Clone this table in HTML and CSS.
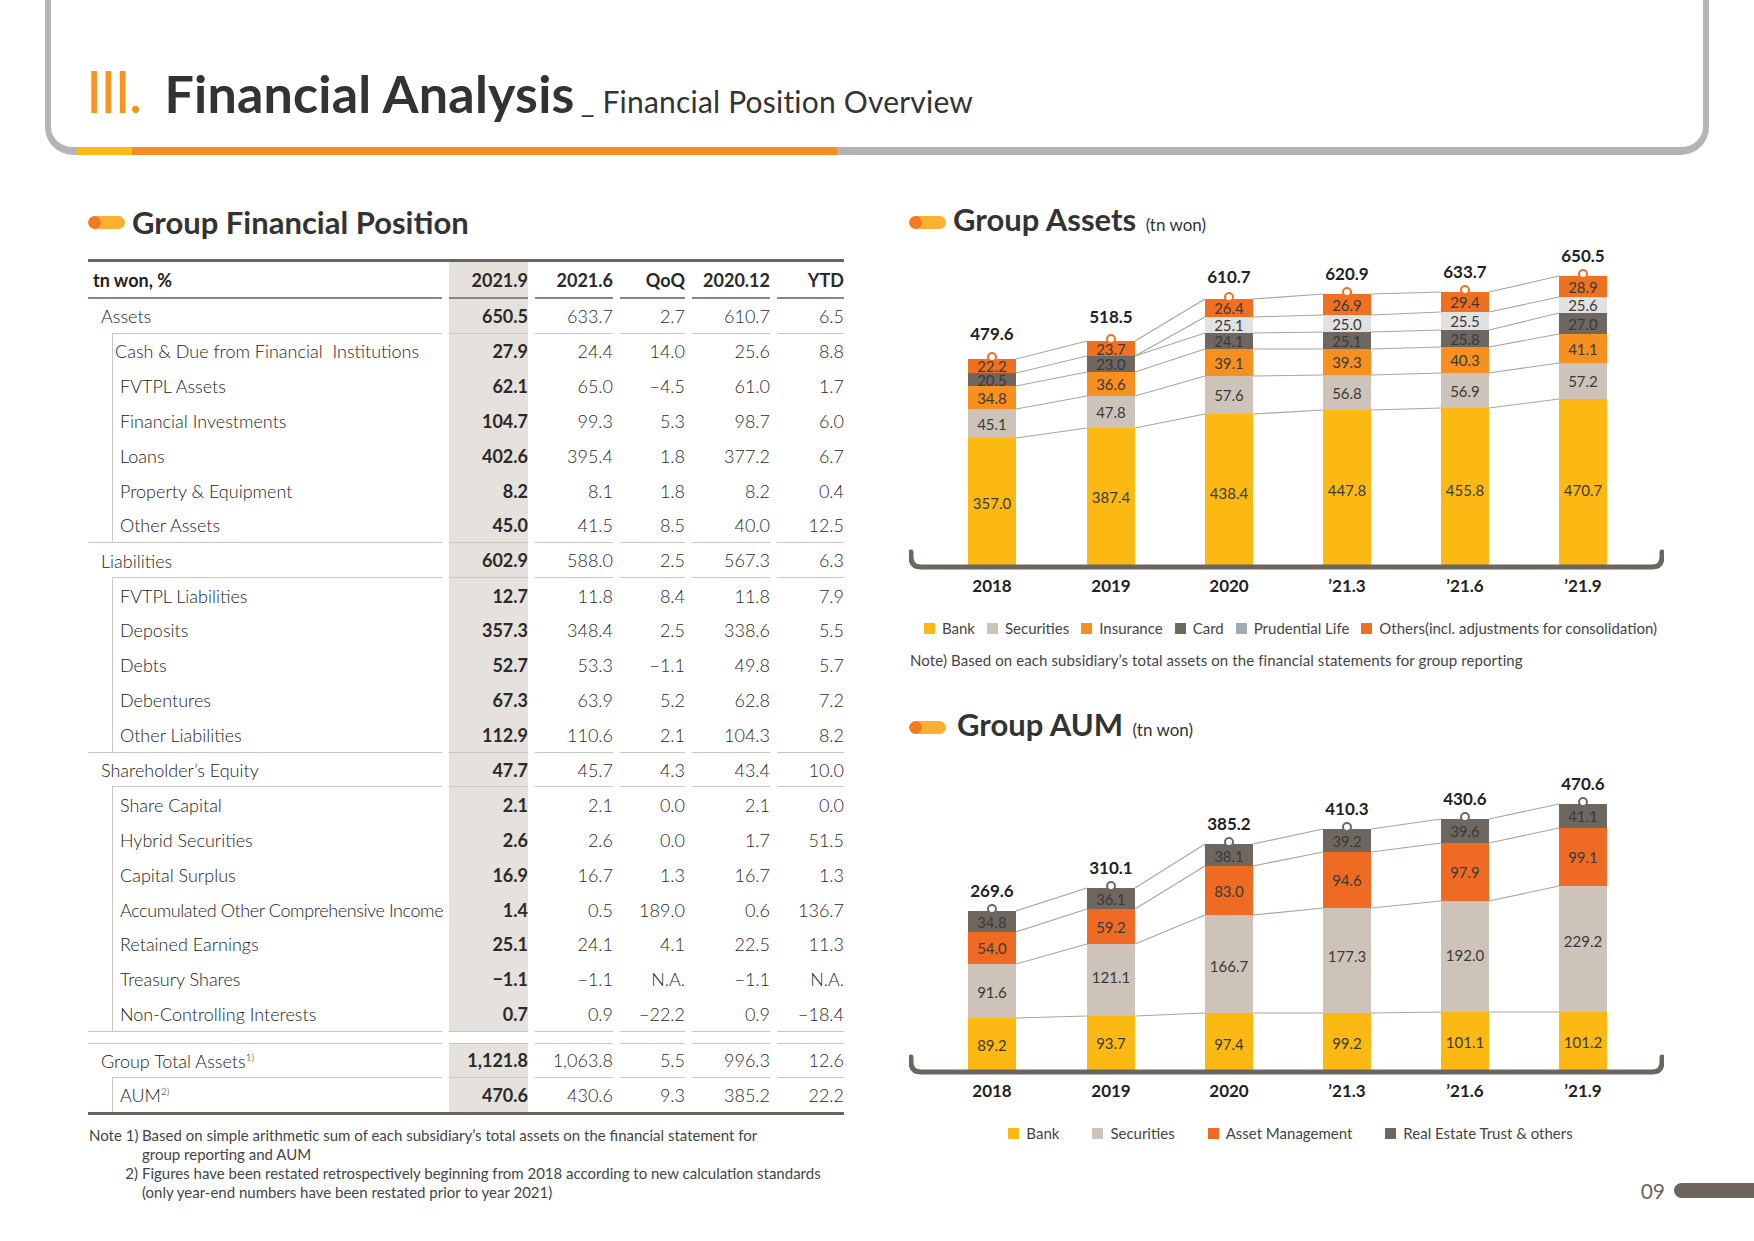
FILE: index.html
```html
<!DOCTYPE html>
<html lang="en">
<head>
<meta charset="utf-8">
<title>Financial Analysis - Financial Position Overview</title>
<link rel="stylesheet" href="styles.css">
</head>
<body>
<header class="page-header">
  <h1 class="page-title"><span class="chap">III.</span><span class="main-t">Financial Analysis</span><span class="sub-t">_ Financial Position Overview</span></h1>
  <div class="header-bar"></div>
</header>

<div class="main">
  <section class="left">
    <h2 class="sec-title"><span class="pill"></span><span class="sec-text">Group Financial Position</span></h2>
    <div class="fin-wrap">
      <table class="fin">
        <colgroup>
          <col class="w-lbl"><col class="w-a"><col class="w-b"><col class="w-c"><col class="w-d"><col class="w-e">
        </colgroup>
        <thead>
          <tr><th class="lbl hdr-lbl">tn won, %</th><th class="c1">2021.9</th><th>2021.6</th><th>QoQ</th><th>2020.12</th><th>YTD</th></tr>
        </thead>
        <tbody>
          <tr class="top"><td class="lbl">Assets</td><td class="c1">650.5</td><td>633.7</td><td>2.7</td><td>610.7</td><td>6.5</td></tr>
          <tr class="sub"><td class="lbl lbl-cash">Cash &amp; Due from Financial&nbsp; Institutions</td><td class="c1">27.9</td><td>24.4</td><td>14.0</td><td>25.6</td><td>8.8</td></tr>
          <tr class="sub"><td class="lbl">FVTPL Assets</td><td class="c1">62.1</td><td>65.0</td><td>−4.5</td><td>61.0</td><td>1.7</td></tr>
          <tr class="sub"><td class="lbl">Financial Investments</td><td class="c1">104.7</td><td>99.3</td><td>5.3</td><td>98.7</td><td>6.0</td></tr>
          <tr class="sub"><td class="lbl">Loans</td><td class="c1">402.6</td><td>395.4</td><td>1.8</td><td>377.2</td><td>6.7</td></tr>
          <tr class="sub"><td class="lbl">Property &amp; Equipment</td><td class="c1">8.2</td><td>8.1</td><td>1.8</td><td>8.2</td><td>0.4</td></tr>
          <tr class="sub end"><td class="lbl">Other Assets</td><td class="c1">45.0</td><td>41.5</td><td>8.5</td><td>40.0</td><td>12.5</td></tr>
          <tr class="top"><td class="lbl">Liabilities</td><td class="c1">602.9</td><td>588.0</td><td>2.5</td><td>567.3</td><td>6.3</td></tr>
          <tr class="sub"><td class="lbl">FVTPL Liabilities</td><td class="c1">12.7</td><td>11.8</td><td>8.4</td><td>11.8</td><td>7.9</td></tr>
          <tr class="sub"><td class="lbl">Deposits</td><td class="c1">357.3</td><td>348.4</td><td>2.5</td><td>338.6</td><td>5.5</td></tr>
          <tr class="sub"><td class="lbl">Debts</td><td class="c1">52.7</td><td>53.3</td><td>−1.1</td><td>49.8</td><td>5.7</td></tr>
          <tr class="sub"><td class="lbl">Debentures</td><td class="c1">67.3</td><td>63.9</td><td>5.2</td><td>62.8</td><td>7.2</td></tr>
          <tr class="sub end"><td class="lbl">Other Liabilities</td><td class="c1">112.9</td><td>110.6</td><td>2.1</td><td>104.3</td><td>8.2</td></tr>
          <tr class="top"><td class="lbl">Shareholder’s Equity</td><td class="c1">47.7</td><td>45.7</td><td>4.3</td><td>43.4</td><td>10.0</td></tr>
          <tr class="sub"><td class="lbl">Share Capital</td><td class="c1">2.1</td><td>2.1</td><td>0.0</td><td>2.1</td><td>0.0</td></tr>
          <tr class="sub"><td class="lbl">Hybrid Securities</td><td class="c1">2.6</td><td>2.6</td><td>0.0</td><td>1.7</td><td>51.5</td></tr>
          <tr class="sub"><td class="lbl">Capital Surplus</td><td class="c1">16.9</td><td>16.7</td><td>1.3</td><td>16.7</td><td>1.3</td></tr>
          <tr class="sub"><td class="lbl lbl-tight">Accumulated Other Comprehensive Income</td><td class="c1">1.4</td><td>0.5</td><td>189.0</td><td>0.6</td><td>136.7</td></tr>
          <tr class="sub"><td class="lbl">Retained Earnings</td><td class="c1">25.1</td><td>24.1</td><td>4.1</td><td>22.5</td><td>11.3</td></tr>
          <tr class="sub"><td class="lbl">Treasury Shares</td><td class="c1">−1.1</td><td>−1.1</td><td>N.A.</td><td>−1.1</td><td>N.A.</td></tr>
          <tr class="sub end"><td class="lbl">Non-Controlling Interests</td><td class="c1">0.7</td><td>0.9</td><td>−22.2</td><td>0.9</td><td>−18.4</td></tr>
          <tr class="spacer"><td></td><td></td><td></td><td></td><td></td><td></td></tr>
          <tr class="top total"><td class="lbl">Group Total Assets<sup>1)</sup></td><td class="c1">1,121.8</td><td>1,063.8</td><td>5.5</td><td>996.3</td><td>12.6</td></tr>
          <tr class="sub last"><td class="lbl">AUM<sup>2)</sup></td><td class="c1">470.6</td><td>430.6</td><td>9.3</td><td>385.2</td><td>22.2</td></tr>
        </tbody>
      </table>
    </div>
    <div class="notes">
      <span class="note-num">Note 1)</span><span class="note-body">Based on simple arithmetic sum of each subsidiary’s total assets on the financial statement for<br>group reporting and AUM</span>
      <span class="note-num">2)</span><span class="note-body">Figures have been restated retrospectively beginning from 2018 according to new calculation standards<br>(only year-end numbers have been restated prior to year 2021)</span>
    </div>
  </section>

  <section class="right">
    <h2 class="sec-title"><span class="pill"></span><span class="sec-text">Group Assets <span class="unit">(tn won)</span></span></h2>
    <svg class="chart" width="755" height="360" viewBox="909 240 755 360" aria-label="Group Assets chart">
      <g>
        <line class="ln" x1="1016" y1="359" x2="1087" y2="341"/>
        <line class="ln" x1="1016" y1="373" x2="1087" y2="356"/>
        <line class="ln" x1="1016" y1="386" x2="1087" y2="372"/>
        <line class="ln" x1="1016" y1="409" x2="1087" y2="396"/>
        <line class="ln" x1="1016" y1="438" x2="1087" y2="428"/>
        <line class="ln" x1="1135" y1="341" x2="1205" y2="299"/>
        <line class="ln" x1="1135" y1="356" x2="1205" y2="317"/>
        <line class="ln" x1="1135" y1="356" x2="1205" y2="333"/>
        <line class="ln" x1="1135" y1="372" x2="1205" y2="349"/>
        <line class="ln" x1="1135" y1="396" x2="1205" y2="376"/>
        <line class="ln" x1="1135" y1="428" x2="1205" y2="414"/>
        <line class="ln" x1="1253" y1="299" x2="1323" y2="294"/>
        <line class="ln" x1="1253" y1="317" x2="1323" y2="315"/>
        <line class="ln" x1="1253" y1="333" x2="1323" y2="332"/>
        <line class="ln" x1="1253" y1="349" x2="1323" y2="349"/>
        <line class="ln" x1="1253" y1="376" x2="1323" y2="375"/>
        <line class="ln" x1="1253" y1="414" x2="1323" y2="410"/>
        <line class="ln" x1="1371" y1="294" x2="1441" y2="292"/>
        <line class="ln" x1="1371" y1="315" x2="1441" y2="312"/>
        <line class="ln" x1="1371" y1="332" x2="1441" y2="330"/>
        <line class="ln" x1="1371" y1="349" x2="1441" y2="347"/>
        <line class="ln" x1="1371" y1="375" x2="1441" y2="373"/>
        <line class="ln" x1="1371" y1="410" x2="1441" y2="408"/>
        <line class="ln" x1="1489" y1="292" x2="1559" y2="276"/>
        <line class="ln" x1="1489" y1="312" x2="1559" y2="297"/>
        <line class="ln" x1="1489" y1="330" x2="1559" y2="313"/>
        <line class="ln" x1="1489" y1="347" x2="1559" y2="334"/>
        <line class="ln" x1="1489" y1="373" x2="1559" y2="363"/>
        <line class="ln" x1="1489" y1="408" x2="1559" y2="399"/>
      </g>
      <g>
        <rect class="oth" x="968" y="359" width="48" height="14"/>
        <rect class="card" x="968" y="373" width="48" height="13"/>
        <rect class="ins" x="968" y="386" width="48" height="23"/>
        <rect class="sec" x="968" y="409" width="48" height="29"/>
        <rect class="bank" x="968" y="438" width="48" height="128"/>

        <rect class="oth" x="1087" y="341" width="48" height="15"/>
        <rect class="card" x="1087" y="356" width="48" height="16"/>
        <rect class="ins" x="1087" y="372" width="48" height="24"/>
        <rect class="sec" x="1087" y="396" width="48" height="32"/>
        <rect class="bank" x="1087" y="428" width="48" height="138"/>

        <rect class="oth" x="1205" y="299" width="48" height="18"/>
        <rect class="prud" x="1205" y="317" width="48" height="16"/>
        <rect class="card" x="1205" y="333" width="48" height="16"/>
        <rect class="ins" x="1205" y="349" width="48" height="27"/>
        <rect class="sec" x="1205" y="376" width="48" height="38"/>
        <rect class="bank" x="1205" y="414" width="48" height="152"/>

        <rect class="oth" x="1323" y="294" width="48" height="21"/>
        <rect class="prud" x="1323" y="315" width="48" height="17"/>
        <rect class="card" x="1323" y="332" width="48" height="17"/>
        <rect class="ins" x="1323" y="349" width="48" height="26"/>
        <rect class="sec" x="1323" y="375" width="48" height="35"/>
        <rect class="bank" x="1323" y="410" width="48" height="156"/>

        <rect class="oth" x="1441" y="292" width="48" height="20"/>
        <rect class="prud" x="1441" y="312" width="48" height="18"/>
        <rect class="card" x="1441" y="330" width="48" height="17"/>
        <rect class="ins" x="1441" y="347" width="48" height="26"/>
        <rect class="sec" x="1441" y="373" width="48" height="35"/>
        <rect class="bank" x="1441" y="408" width="48" height="158"/>

        <rect class="oth" x="1559" y="276" width="48" height="21"/>
        <rect class="prud" x="1559" y="297" width="48" height="16"/>
        <rect class="card" x="1559" y="313" width="48" height="21"/>
        <rect class="ins" x="1559" y="334" width="48" height="29"/>
        <rect class="sec" x="1559" y="363" width="48" height="36"/>
        <rect class="bank" x="1559" y="399" width="48" height="167"/>
      </g>
      <g>
        <circle class="pin pin-o" cx="992" cy="357" r="4"/>
        <circle class="pin pin-o" cx="1111" cy="339" r="4"/>
        <circle class="pin pin-o" cx="1229" cy="297" r="4"/>
        <circle class="pin pin-o" cx="1347" cy="292" r="4"/>
        <circle class="pin pin-o" cx="1465" cy="290" r="4"/>
        <circle class="pin pin-o" cx="1583" cy="274" r="4"/>
      </g>
      <g>
        <text class="v" x="992" y="365.5">22.2</text>
        <text class="v" x="992" y="380">20.5</text>
        <text class="v" x="992" y="397.5">34.8</text>
        <text class="v" x="992" y="423.5">45.1</text>
        <text class="v" x="992" y="503">357.0</text>

        <text class="v" x="1111" y="348.5">23.7</text>
        <text class="v" x="1111" y="364">23.0</text>
        <text class="v" x="1111" y="384">36.6</text>
        <text class="v" x="1111" y="412">47.8</text>
        <text class="v" x="1111" y="497">387.4</text>

        <text class="v" x="1229" y="308">26.4</text>
        <text class="v" x="1229" y="325">25.1</text>
        <text class="v" x="1229" y="341">24.1</text>
        <text class="v" x="1229" y="362.5">39.1</text>
        <text class="v" x="1229" y="395">57.6</text>
        <text class="v" x="1229" y="493">438.4</text>

        <text class="v" x="1347" y="304.5">26.9</text>
        <text class="v" x="1347" y="323.5">25.0</text>
        <text class="v" x="1347" y="340.5">25.1</text>
        <text class="v" x="1347" y="362">39.3</text>
        <text class="v" x="1347" y="392.5">56.8</text>
        <text class="v" x="1347" y="490">447.8</text>

        <text class="v" x="1465" y="302">29.4</text>
        <text class="v" x="1465" y="321">25.5</text>
        <text class="v" x="1465" y="338.5">25.8</text>
        <text class="v" x="1465" y="360">40.3</text>
        <text class="v" x="1465" y="390.5">56.9</text>
        <text class="v" x="1465" y="490">455.8</text>

        <text class="v" x="1583" y="286.5">28.9</text>
        <text class="v" x="1583" y="305">25.6</text>
        <text class="v" x="1583" y="323.5">27.0</text>
        <text class="v" x="1583" y="348.5">41.1</text>
        <text class="v" x="1583" y="381">57.2</text>
        <text class="v" x="1583" y="490">470.7</text>
      </g>
      <g>
        <text class="t" x="992" y="333">479.6</text>
        <text class="t" x="1111" y="316">518.5</text>
        <text class="t" x="1229" y="276">610.7</text>
        <text class="t" x="1347" y="273">620.9</text>
        <text class="t" x="1465" y="271">633.7</text>
        <text class="t" x="1583" y="255">650.5</text>
      </g>
      <path class="axis" d="M 911 552 V 557 Q 911 567 921 567 H 1652 Q 1662 567 1662 557 V 552"/>
      <g>
        <text class="y" x="992" y="585">2018</text>
        <text class="y" x="1111" y="585">2019</text>
        <text class="y" x="1229" y="585">2020</text>
        <text class="y" x="1347" y="585">’21.3</text>
        <text class="y" x="1465" y="585">’21.6</text>
        <text class="y" x="1583" y="585">’21.9</text>
      </g>
    </svg>
    <div class="legend legend-assets">
      <span class="lg"><i class="sw sw-bank"></i>Bank</span>
      <span class="lg"><i class="sw sw-sec"></i>Securities</span>
      <span class="lg"><i class="sw sw-ins"></i>Insurance</span>
      <span class="lg"><i class="sw sw-card"></i>Card</span>
      <span class="lg"><i class="sw sw-prud"></i>Prudential Life</span>
      <span class="lg"><i class="sw sw-oth"></i>Others(incl. adjustments for consolidation)</span>
    </div>
    <p class="chart-note">Note) Based on each subsidiary’s total assets on the financial statements for group reporting</p>

    <h2 class="sec-title aum-title"><span class="pill"></span><span class="sec-text">Group AUM <span class="unit">(tn won)</span></span></h2>
    <svg class="chart" width="755" height="360" viewBox="909 745 755 360" aria-label="Group AUM chart">
      <g>
        <line class="ln" x1="1016" y1="911" x2="1087" y2="888"/>
        <line class="ln" x1="1016" y1="932" x2="1087" y2="909"/>
        <line class="ln" x1="1016" y1="964" x2="1087" y2="944"/>
        <line class="ln" x1="1016" y1="1018" x2="1087" y2="1016"/>
        <line class="ln" x1="1135" y1="888" x2="1205" y2="844"/>
        <line class="ln" x1="1135" y1="909" x2="1205" y2="866"/>
        <line class="ln" x1="1135" y1="944" x2="1205" y2="915"/>
        <line class="ln" x1="1135" y1="1016" x2="1205" y2="1013"/>
        <line class="ln" x1="1253" y1="844" x2="1323" y2="829"/>
        <line class="ln" x1="1253" y1="866" x2="1323" y2="852"/>
        <line class="ln" x1="1253" y1="915" x2="1323" y2="908"/>
        <line class="ln" x1="1253" y1="1013" x2="1323" y2="1013"/>
        <line class="ln" x1="1371" y1="829" x2="1441" y2="819"/>
        <line class="ln" x1="1371" y1="852" x2="1441" y2="843"/>
        <line class="ln" x1="1371" y1="908" x2="1441" y2="901"/>
        <line class="ln" x1="1371" y1="1013" x2="1441" y2="1012"/>
        <line class="ln" x1="1489" y1="819" x2="1559" y2="804"/>
        <line class="ln" x1="1489" y1="843" x2="1559" y2="828"/>
        <line class="ln" x1="1489" y1="901" x2="1559" y2="886"/>
        <line class="ln" x1="1489" y1="1012" x2="1559" y2="1012"/>
      </g>
      <g>
        <rect class="re" x="968" y="911" width="48" height="21"/>
        <rect class="am" x="968" y="932" width="48" height="32"/>
        <rect class="sec" x="968" y="964" width="48" height="54"/>
        <rect class="bank" x="968" y="1018" width="48" height="52"/>

        <rect class="re" x="1087" y="888" width="48" height="21"/>
        <rect class="am" x="1087" y="909" width="48" height="35"/>
        <rect class="sec" x="1087" y="944" width="48" height="72"/>
        <rect class="bank" x="1087" y="1016" width="48" height="54"/>

        <rect class="re" x="1205" y="844" width="48" height="22"/>
        <rect class="am" x="1205" y="866" width="48" height="49"/>
        <rect class="sec" x="1205" y="915" width="48" height="98"/>
        <rect class="bank" x="1205" y="1013" width="48" height="57"/>

        <rect class="re" x="1323" y="829" width="48" height="23"/>
        <rect class="am" x="1323" y="852" width="48" height="56"/>
        <rect class="sec" x="1323" y="908" width="48" height="105"/>
        <rect class="bank" x="1323" y="1013" width="48" height="57"/>

        <rect class="re" x="1441" y="819" width="48" height="24"/>
        <rect class="am" x="1441" y="843" width="48" height="58"/>
        <rect class="sec" x="1441" y="901" width="48" height="111"/>
        <rect class="bank" x="1441" y="1012" width="48" height="58"/>

        <rect class="re" x="1559" y="804" width="48" height="24"/>
        <rect class="am" x="1559" y="828" width="48" height="58"/>
        <rect class="sec" x="1559" y="886" width="48" height="126"/>
        <rect class="bank" x="1559" y="1012" width="48" height="58"/>
      </g>
      <g>
        <circle class="pin pin-g" cx="992" cy="909" r="4"/>
        <circle class="pin pin-g" cx="1111" cy="886" r="4"/>
        <circle class="pin pin-g" cx="1229" cy="842" r="4"/>
        <circle class="pin pin-g" cx="1347" cy="827" r="4"/>
        <circle class="pin pin-g" cx="1465" cy="817" r="4"/>
        <circle class="pin pin-g" cx="1583" cy="802" r="4"/>
      </g>
      <g>
        <text class="v" x="992" y="922">34.8</text>
        <text class="v" x="992" y="948">54.0</text>
        <text class="v" x="992" y="992">91.6</text>
        <text class="v" x="992" y="1045">89.2</text>

        <text class="v" x="1111" y="899">36.1</text>
        <text class="v" x="1111" y="927">59.2</text>
        <text class="v" x="1111" y="977">121.1</text>
        <text class="v" x="1111" y="1043">93.7</text>

        <text class="v" x="1229" y="856">38.1</text>
        <text class="v" x="1229" y="891">83.0</text>
        <text class="v" x="1229" y="966">166.7</text>
        <text class="v" x="1229" y="1044">97.4</text>

        <text class="v" x="1347" y="841">39.2</text>
        <text class="v" x="1347" y="880">94.6</text>
        <text class="v" x="1347" y="956">177.3</text>
        <text class="v" x="1347" y="1043">99.2</text>

        <text class="v" x="1465" y="831">39.6</text>
        <text class="v" x="1465" y="872">97.9</text>
        <text class="v" x="1465" y="955">192.0</text>
        <text class="v" x="1465" y="1042">101.1</text>

        <text class="v" x="1583" y="816">41.1</text>
        <text class="v" x="1583" y="857">99.1</text>
        <text class="v" x="1583" y="941">229.2</text>
        <text class="v" x="1583" y="1042">101.2</text>
      </g>
      <g>
        <text class="t" x="992" y="890">269.6</text>
        <text class="t" x="1111" y="867">310.1</text>
        <text class="t" x="1229" y="823">385.2</text>
        <text class="t" x="1347" y="808">410.3</text>
        <text class="t" x="1465" y="798">430.6</text>
        <text class="t" x="1583" y="783">470.6</text>
      </g>
      <path class="axis" d="M 911 1057 V 1062 Q 911 1072 921 1072 H 1652 Q 1662 1072 1662 1062 V 1057"/>
      <g>
        <text class="y" x="992" y="1090">2018</text>
        <text class="y" x="1111" y="1090">2019</text>
        <text class="y" x="1229" y="1090">2020</text>
        <text class="y" x="1347" y="1090">’21.3</text>
        <text class="y" x="1465" y="1090">’21.6</text>
        <text class="y" x="1583" y="1090">’21.9</text>
      </g>
    </svg>
    <div class="legend legend-aum">
      <span class="lg"><i class="sw sw-bank"></i>Bank</span>
      <span class="lg"><i class="sw sw-sec"></i>Securities</span>
      <span class="lg"><i class="sw sw-am"></i>Asset Management</span>
      <span class="lg"><i class="sw sw-card"></i>Real Estate Trust &amp; others</span>
    </div>
    <div class="folio"><span class="folio-num">09</span><span class="folio-bar"></span></div>
  </section>
</div>
</body>
</html>
```

FILE: styles.css
```css
* { box-sizing: border-box; margin: 0; padding: 0; }
html, body { width: 1754px; height: 1241px; }
body {
  background: #fff;
  font-family: Lato, "Noto Sans", sans-serif;
  color: #333;
  overflow: hidden;
}

/* ---------- header ---------- */
.page-header {
  position: relative;
  margin-left: 45px;
  width: 1664px;
  height: 155px;
  border: 6px solid #b4b4b4;
  border-top: 0;
  border-bottom-width: 8px;
  border-radius: 0 0 28px 28px;
  padding: 61px 0 0 35px;
}
.page-title {
  line-height: 60px;
  font-size: 52px;
  font-weight: 700;
  color: #333;
  white-space: nowrap;
}
.chap {
  font-size: 58px;
  font-weight: 400;
  color: #f7941d;
  letter-spacing: -2px;
  margin-right: 24px;
}
.main-t { letter-spacing: 0.2px; }
.sub-t {
  font-size: 30px;
  font-weight: 400;
  margin-left: 6px;
  letter-spacing: 0.2px;
}
.header-bar {
  position: absolute;
  left: 25px;
  bottom: -8px;
  width: 761px;
  height: 8px;
  border-radius: 4px 0 0 4px;
  background: linear-gradient(to right, #fdb913 56px, #f68b1f 56px);
}

/* ---------- layout ---------- */
.main { display: flex; padding-top: 49px; }
.left { width: 756px; margin-left: 88px; }
.right { width: 845px; margin-left: 65px; }

.sec-title {
  display: flex;
  align-items: center;
  height: 36px;
  line-height: 36px;
  font-size: 31px;
  font-weight: 700;
  color: #333;
  white-space: nowrap;
}
.pill {
  flex: none;
  width: 37px;
  height: 13px;
  border-radius: 7px;
  margin-right: 7px;
  background: radial-gradient(circle at 6.5px 50%, #f47920 6px, rgba(244,121,32,0) 6.6px), #fbb034;
}
.unit { font-size: 17px; font-weight: 400; margin-left: 2px; }

/* ---------- table ---------- */
.fin-wrap {
  margin-top: 19px;
  border-top: 3px solid #6b635c;
  border-bottom: 3px solid #6b635c;
}
.fin {
  width: 770px;
  margin: 0 -7px;
  border-collapse: separate;
  border-spacing: 7px 0;
  table-layout: fixed;
  font-size: 18px;
  color: #2a2a2a;
}
.w-lbl { width: 354px; }
.w-a { width: 79px; }
.w-b { width: 78px; }
.w-c { width: 65px; }
.w-d { width: 78px; }
.w-e { width: 67px; }

.fin th, .fin td {
  padding: 0;
  text-align: right;
  white-space: nowrap;
  vertical-align: middle;
  font-weight: 300;
}
.fin thead tr { height: 37px; }
.fin thead th {
  font-weight: 700;
  border-bottom: 2px solid #8d8680;
}
.fin .lbl { text-align: left; color: #222; }
.fin .lbl-tight { letter-spacing: -0.4px; }
.fin .hdr-lbl { padding-left: 5px; }
.fin .c1 { background-color: #e5e1dc; font-weight: 700; }

.fin tbody tr { height: 34.9px; }
.fin .top .lbl { padding-left: 13px; }
.fin .top td { border-bottom: 1px solid #c9c5c1; }
.fin .top td.lbl {
  border-bottom: 0;
  background: linear-gradient(#c9c5c1, #c9c5c1) 24px 100% / calc(100% - 24px) 1px no-repeat;
}
.fin .sub .lbl {
  padding-left: 32px;
  background: linear-gradient(#c9c5c1, #c9c5c1) 24px 0 / 1px 100% no-repeat;
}
.fin .sub .lbl-cash { padding-left: 27px; }
.fin .end td { border-bottom: 1px solid #c9c5c1; }
.fin tr.spacer { height: 11px; }
.fin tr.spacer td { background: none; }
.fin .total td { border-top: 1px solid #c9c5c1; }
.fin .total { height: 35px; }
.fin tr.last { height: 34px; }
.fin sup { font-size: 10px; vertical-align: 7px; line-height: 0; }

.notes {
  margin-top: 11px;
  display: grid;
  grid-template-columns: 49px 1fr;
  column-gap: 4px;
  font-size: 15px;
  line-height: 19px;
  color: #444;
  white-space: nowrap;
  margin-left: 1px;
}
.note-num { text-align: right; }

/* ---------- charts ---------- */
.chart { display: block; }
.chart text {
  font-family: Lato, "Noto Sans", sans-serif;
  text-anchor: middle;
  dominant-baseline: central;
}
.chart .v { font-size: 15px; font-weight: 400; fill: #3a3a3a; }
.chart .t { font-size: 17px; font-weight: 700; fill: #222; }
.chart .y { font-size: 17px; font-weight: 700; fill: #222; }
.chart .ln { stroke: #aaa59f; stroke-width: 1.2; fill: none; }
.chart .axis { stroke: #6d665f; stroke-width: 5; fill: none; stroke-linecap: round; stroke-linejoin: round; }
.chart .pin { fill: #fff; stroke-width: 2; }
.chart .pin-o { stroke: #f07022; }
.chart .pin-g { stroke: #6e6760; }

.bank { fill: #fdb913; }
.sec { fill: #cdc3b9; }
.ins { fill: #f7901e; }
.card { fill: #6e6760; }
.prud { fill: #e1e1e1; }
.oth { fill: #f07022; }
.am { fill: #ef6b24; }
.re { fill: #6e6760; }

.legend {
  width: 755px;
  display: flex;
  justify-content: center;
  align-items: center;
  height: 20px;
  margin-top: 18px;
  font-size: 15px;
  color: #444;
  white-space: nowrap;
}
.legend-assets { gap: 12px; padding-left: 8px; }
.legend-aum { gap: 33px; padding-left: 8px; }
.lg { display: flex; align-items: center; }
.sw { display: inline-block; width: 11px; height: 11px; margin-right: 7px; }
.sw-bank { background: #fdb913; }
.sw-sec { background: #cdc3b9; }
.sw-ins { background: #f7901e; }
.sw-card { background: #6e6760; }
.sw-prud { background: #a1abb0; }
.sw-oth { background: #f07022; }
.sw-am { background: #ef6b24; }

.chart-note {
  margin-top: 12px;
  padding-left: 1px;
  font-size: 15px;
  line-height: 20px;
  letter-spacing: 0.1px;
  color: #444;
  white-space: nowrap;
}

.aum-title { margin-top: 39px; }
.aum-title .pill { margin-right: 11px; }

.folio {
  margin-top: 40px;
  height: 15px;
  display: flex;
  justify-content: flex-end;
  align-items: center;
}
.folio-num {
  font-size: 21px;
  line-height: 15px;
  color: #6d645c;
  margin-right: 9px;
}
.folio-bar {
  width: 80px;
  height: 15px;
  border-radius: 8px 0 0 8px;
  background: #6d645c;
}
```
